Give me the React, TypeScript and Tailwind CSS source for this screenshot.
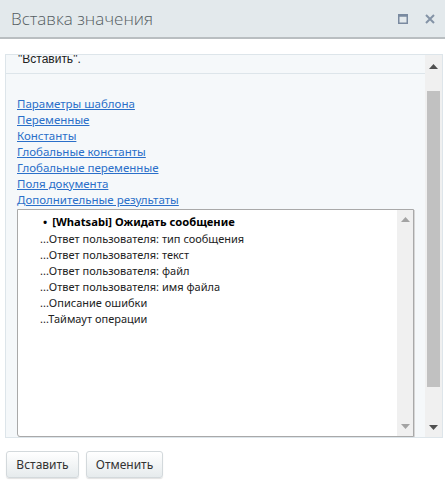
const links = [
  "Параметры шаблона",
  "Переменные",
  "Константы",
  "Глобальные константы",
  "Глобальные переменные",
  "Поля документа",
  "Дополнительные результаты",
];

const results = [
  "Ответ пользователя: тип сообщения",
  "Ответ пользователя: текст",
  "Ответ пользователя: файл",
  "Ответ пользователя: имя файла",
  "Описание ошибки",
  "Таймаут операции",
];

const ArrowUp = ({ color }: { color: string }) => (
  <svg width="9" height="5" viewBox="0 0 9 5">
    <path d="M0 5 L4.5 0 L9 5 Z" fill={color} />
  </svg>
);

const ArrowDown = ({ color }: { color: string }) => (
  <svg width="9" height="5" viewBox="0 0 9 5">
    <path d="M0 0 L4.5 5 L9 0 Z" fill={color} />
  </svg>
);

export default function App() {
  return (
    <div className="w-[445px] h-[483px] bg-white flex flex-col font-['Open_Sans',sans-serif] overflow-hidden">
      {/* title bar */}
      <div className="h-[39px] shrink-0 bg-[#e3e9ec] border-b-2 border-[#b9bec1] flex items-center pl-[11px] pr-[10px]">
        <span className="text-[17px] text-[#555d62] font-light flex-1">Вставка значения</span>
        <svg width="10" height="10" viewBox="0 0 10 10" className="mr-[17px]">
          <rect x="0.75" y="0.75" width="8.5" height="8.5" fill="none" stroke="#7a8aa0" strokeWidth="1.5" />
          <rect x="0.75" y="0.75" width="8.5" height="2" fill="#7a8aa0" />
        </svg>
        <svg width="10" height="10" viewBox="0 0 10 10">
          <path d="M1 1 L9 9 M9 1 L1 9" stroke="#8493a6" strokeWidth="2" />
        </svg>
      </div>

      {/* scroll panel */}
      <div className="mx-[5px] mt-[15px] mr-[2px] h-[384px] border border-[#dde5ea] bg-[#f5f8fa] flex">
        <div className="flex-1 overflow-hidden flex flex-col">
          <div className="h-[19px] border-b border-[#dde5ea] overflow-hidden">
            <div className="mt-[-4px] pl-[12px] text-[12px] leading-[16px] text-[#222] font-['Liberation_Sans',sans-serif]">
              "Вставить".
            </div>
          </div>
          <div className="pt-[22px] pl-[11px] flex flex-col font-['Noto_Sans',sans-serif]">
            {links.map((l) => (
              <a key={l} className="text-[11.5px] leading-[16px] text-[#2a6fc9] underline w-fit">
                {l}
              </a>
            ))}
          </div>
          {/* listbox */}
          <div className="ml-[11px] mr-[11px] mt-[1px] flex-1 border border-[#a9a9a9] rounded-bl-[3px] bg-white flex shadow-[1px_1px_0_#d6d6d6]">
            <div className="flex-1 pt-[3px] font-['Noto_Sans',sans-serif] text-[11px] text-[#222]">
              <div className="leading-[18px] pl-[25px] font-bold text-black text-[11.2px]">
                <span className="mr-[5px]">•</span>[Whatsabi] Ожидать сообщение
              </div>
              {results.map((r) => (
                <div key={r} className="leading-[16px] pl-[22px]">
                  ...{r}
                </div>
              ))}
            </div>
            <div className="w-[16px] bg-[#f0f0f0] flex flex-col items-center justify-between py-[7px]">
              <ArrowUp color="#a3a3a3" />
              <ArrowDown color="#a3a3a3" />
            </div>
          </div>
        </div>
        {/* outer scrollbar */}
        <div className="w-[17px] bg-[#f0f0f0] flex flex-col items-center">
          <div className="h-[36px] flex items-start pt-[9px]">
            <ArrowUp color="#505050" />
          </div>
          <div className="w-[13px] h-[296px] bg-[#c1c1c1]" />
          <div className="flex-1 flex items-end pb-[7px]">
            <ArrowDown color="#505050" />
          </div>
        </div>
      </div>

      {/* buttons */}
      <div className="flex gap-[7px] pl-[6px] pt-[13px]">
        <button className="w-[73px] h-[27px] rounded-[3px] border border-[#d3d9dc] bg-gradient-to-b from-white to-[#e6ebed] shadow-[0_1px_1px_rgba(0,0,0,0.12)] text-[12px] text-[#333] font-['Noto_Sans',sans-serif]">
          Вставить
        </button>
        <button className="w-[77px] h-[27px] rounded-[3px] border border-[#d3d9dc] bg-gradient-to-b from-white to-[#e6ebed] shadow-[0_1px_1px_rgba(0,0,0,0.12)] text-[12px] text-[#333] font-['Noto_Sans',sans-serif]">
          Отменить
        </button>
      </div>
    </div>
  );
}
